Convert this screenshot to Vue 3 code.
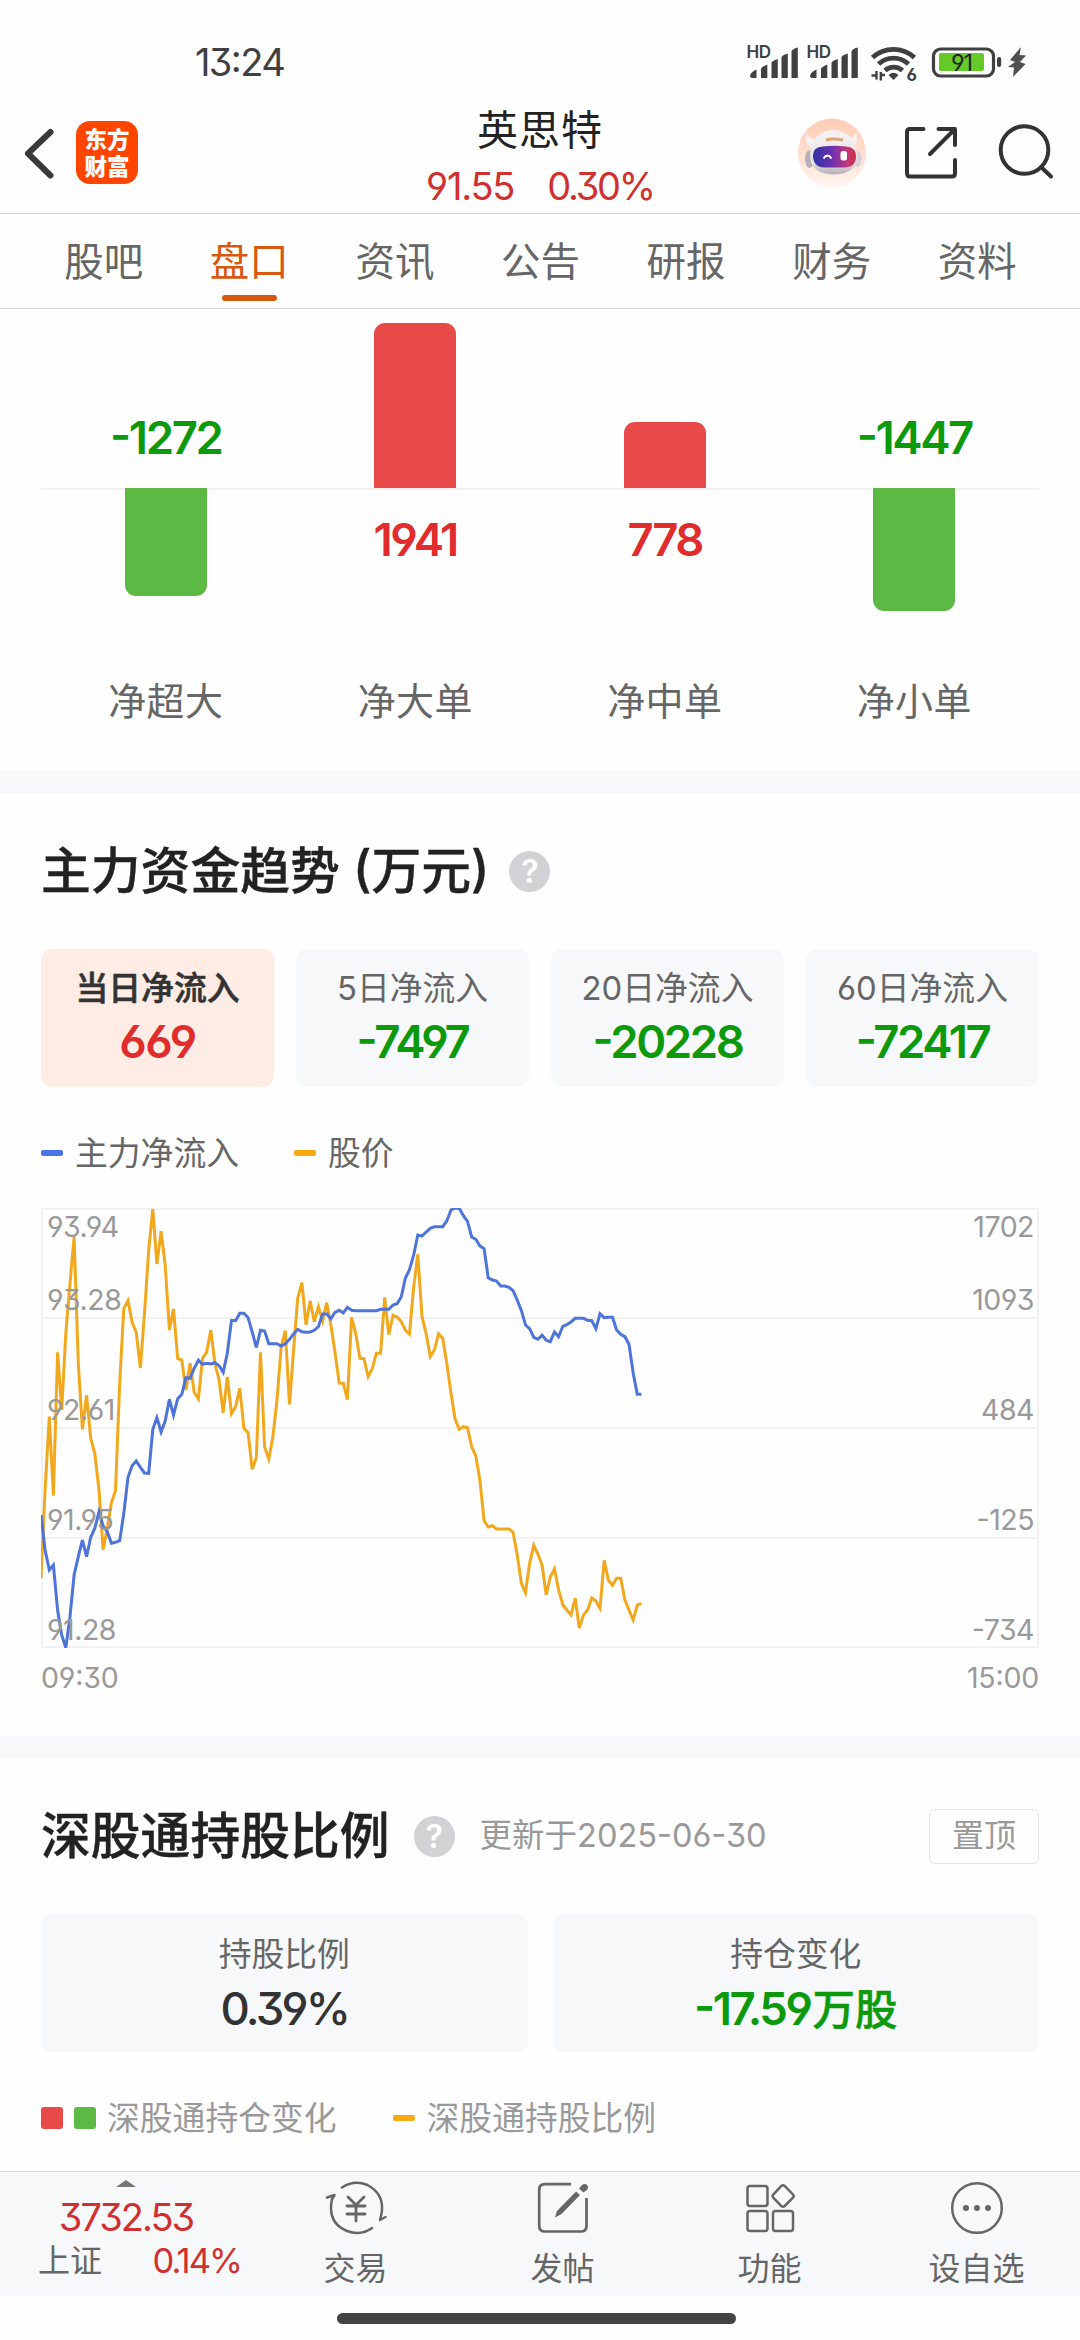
<script setup>
const tabs = ['股吧', '盘口', '资讯', '公告', '研报', '财务', '资料']
const activeTab = '盘口'

const orders = [
  { name: '净超大', value: -1272, size: 108 },
  { name: '净大单', value: 1941, size: 165 },
  { name: '净中单', value: 778, size: 66 },
  { name: '净小单', value: -1447, size: 123 },
]

const periods = [
  { name: '当日净流入', value: 669 },
  { name: '5日净流入', value: -7497 },
  { name: '20日净流入', value: -20228 },
  { name: '60日净流入', value: -72417 },
]

const priceAxis = ['93.94', '93.28', '92.61', '91.95', '91.28']
const flowAxis = ['1702', '1093', '484', '-125', '-734']
const gridLines = [1, 110, 220, 330, 439]

// One sample per minute, in thirds of a pixel from the top of the plot.
const price = [
  1165, 900, 680, 917, 487, 660, 430, 280, 140, 520, 718, 616, 745, 790, 900, 1080, 1015, 938, 902, 580,
  355, 332, 397, 427, 534, 370, 180, 57, 222, 124, 225, 420, 357, 506, 510, 600, 520, 607, 627, 505,
  487, 421, 520, 570, 668, 561, 671, 650, 595, 715, 728, 838, 803, 487, 770, 807, 740, 630, 470, 422,
  643, 480, 325, 278, 404, 332, 395, 350, 393, 338, 405, 487, 579, 580, 629, 382, 430, 505, 506, 560,
  535, 490, 490, 322, 434, 376, 381, 395, 421, 432, 290, 193, 380, 430, 500, 480, 431, 445, 520, 610,
  687, 718, 710, 713, 770, 798, 870, 992, 1011, 1007, 1017, 1017, 1017, 1017, 1027, 1095, 1180, 1208, 1120, 1066,
  1092, 1125, 1214, 1160, 1136, 1200, 1244, 1260, 1275, 1225, 1314, 1275, 1260, 1224, 1233, 1255, 1111, 1170, 1186, 1165,
  1165, 1230, 1260, 1290, 1245, 1240,
]
const flow = [
  975, 1080, 1140, 1125, 1260, 1335, 1373, 1280, 1155, 1100, 1050, 1100, 1042, 1015, 965, 1008, 1025, 1060, 1057, 1052,
  970, 862, 827, 813, 832, 849, 850, 718, 683, 726, 693, 628, 675, 626, 613, 563, 565, 535, 511, 523,
  520, 522, 518, 527, 547, 490, 391, 392, 370, 370, 383, 426, 472, 421, 423, 461, 461, 461, 468, 461,
  448, 432, 418, 425, 427, 426, 421, 410, 372, 372, 386, 367, 361, 369, 352, 361, 362, 362, 362, 362,
  362, 362, 358, 358, 358, 345, 341, 320, 264, 239, 195, 135, 138, 126, 115, 110, 110, 110, 93, 60,
  54, 55, 77, 94, 141, 148, 168, 176, 263, 270, 273, 288, 288, 292, 302, 330, 362, 405, 416, 442,
  448, 436, 451, 455, 426, 440, 409, 404, 396, 385, 385, 385, 391, 392, 416, 371, 383, 382, 382, 420,
  433, 440, 463, 550, 613, 613,
]
const toPoints = (series) =>
  series.map((y, i) => `${(i * 4.141).toFixed(1)},${((y - 54) / 3).toFixed(1)}`).join(' ')
const pricePoints = toPoints(price)
const flowPoints = toPoints(flow)
</script>

<template>
  <div class="screen">
    <div class="status">
      <span class="clock">13:24</span>
      <svg class="status-icons" width="290" height="44" viewBox="740 40 290 44">
        <g v-for="dx in [0, 60]" :key="dx" :transform="`translate(${dx} 0)`" fill="#404040">
          <text x="745.500" y="58" font-size="17" font-weight="600" letter-spacing="-0.500">HD</text>
          <path d="M749 76.500 q0-4 6.500-7 V78 h-5z" />
          <path d="M760 69 q0-2 6.300-4.500 V78 h-6.300z" />
          <path d="M770.500 63 q0-2 6.300-4 V78 h-6.300z" />
          <path d="M780.500 57.500 q0-2 6.300-4 V78 h-6.300z" />
          <path d="M790.500 52 q0-3 6.300-4.500 V78 h-6.300z" />
        </g>
        <g fill="none" stroke="#404040" stroke-width="4.800">
          <path d="M871.500 57.500 a31 31 0 0 1 42 0" />
          <path d="M877.500 64 a22 22 0 0 1 30 0" />
          <path d="M884 70.500 a13 13 0 0 1 17.500 0" />
        </g>
        <path d="M887.500 75 q5-4.500 10 0 l-5 5z" fill="#404040" />
        <g fill="none" stroke="#404040" stroke-width="2.400">
          <path d="M870.500 75.500 H875.500 V71 M875.500 79.500 V73" />
          <path d="M879.800 80.500 V72 M879.800 75 H884" />
        </g>
        <text x="905.500" y="80.500" font-size="17" font-weight="700" fill="#404040">6</text>
        <rect x="932.500" y="49" width="60" height="27" rx="7" fill="#fff" stroke="#404040" stroke-width="3.200" />
        <rect x="938" y="53" width="45" height="18" rx="2" fill="#65ca27" />
        <text x="950" y="70.700" font-size="23.500" fill="#222" textLength="22">91</text>
        <rect x="996" y="57" width="4.200" height="10" rx="2" fill="#404040" />
        <path d="M1020 47 L1009 60 L1014 62 L1007 67 L1013 67.500 L1012 77 L1024.500 64 L1019 62 L1025 55.500 L1018.500 55z" fill="#505050" />
      </svg>
    </div>

    <header class="nav">
      <div class="nav-left">
        <svg width="34" height="60" viewBox="22 122 34 60" fill="none" stroke="#383938" stroke-width="6" stroke-linecap="round" stroke-linejoin="round">
          <path d="M50.500 131 L28 152.500 L50.500 174.500" />
        </svg>
        <div class="logo"><span>东方</span><span>财富</span></div>
      </div>
      <div class="stock">
        <div class="stock-name">英思特</div>
        <div class="stock-quote"><span class="quote-price">91.55</span><span class="quote-change">0.30%</span></div>
      </div>
      <div class="nav-right">
        <svg class="robot" width="68" height="70" viewBox="0 0 68 70">
          <defs>
            <linearGradient id="halo" x1="0" y1="0" x2="0" y2="1">
              <stop offset="0" stop-color="#ffccb4" />
              <stop offset=".6" stop-color="#ffe2d5" />
              <stop offset="1" stop-color="#fff6f1" />
            </linearGradient>
            <linearGradient id="visor" x1="0" y1="0" x2="1" y2="0">
              <stop offset="0" stop-color="#2f33a4" />
              <stop offset=".45" stop-color="#7030b0" />
              <stop offset=".8" stop-color="#c23a78" />
              <stop offset="1" stop-color="#d03045" />
            </linearGradient>
            <linearGradient id="shell" x1="0" y1="0" x2="0" y2="1">
              <stop offset="0" stop-color="#f8f3f3" />
              <stop offset=".75" stop-color="#e6e0e4" />
              <stop offset="1" stop-color="#b3acb4" />
            </linearGradient>
          </defs>
          <ellipse cx="34" cy="35" rx="34" ry="34.500" fill="url(#halo)" />
          <path d="M8 16 q5 5 10 6 l-4 8 q-8-4-6-14z M58 15 q-3 5-8 6 l5 8 q7-5 3-14z" fill="#f5efed" />
          <ellipse cx="11.500" cy="41" rx="4.500" ry="9" fill="#b5b0b9" />
          <ellipse cx="59.500" cy="41" rx="4" ry="8" fill="#d8cfd8" />
          <path d="M12 37 Q14 13 35 12 Q56 13 59 36 Q60 56 36 56.500 Q12 56 12 37z" fill="url(#shell)" />
          <path d="M28 22 q7.500-2 17 0" fill="none" stroke="#d9a67a" stroke-width="3" />
          <path d="M15 37 Q15 29 25 28.500 Q36 27 48 28.500 Q58 29 58 38 Q58 49 47 49.500 H26 Q15 49 15 37z" fill="url(#visor)" />
          <path d="M25.500 40.500 q4-6 8 0" fill="none" stroke="#fff" stroke-width="2" />
          <rect x="42.500" y="33" width="6.500" height="9.500" rx="2.500" fill="#fff" />
        </svg>
        <svg class="share" width="56" height="56" viewBox="902 125 56 56" fill="none" stroke="#333" stroke-width="4" stroke-linejoin="round" stroke-linecap="round">
          <path d="M922.500 129 H909 Q906 129 906 132 V173 Q906 176.500 909 176.500 H951 Q954 176.500 954 173.500 V160" />
          <path d="M937.500 129 H954 V145 M953 130 L929 154" />
        </svg>
        <svg class="search" width="60" height="60" viewBox="997 123 60 60" fill="none" stroke="#333" stroke-width="4" stroke-linecap="round">
          <circle cx="1023.500" cy="150" r="23.800" />
          <path d="M1040 167 L1050 176.500" />
        </svg>
      </div>
    </header>

    <nav class="tabs">
      <span v-for="tab in tabs" :key="tab" class="tab" :class="{ active: tab === activeTab }">{{ tab }}</span>
    </nav>

    <section class="orders">
      <div v-for="o in orders" :key="o.name" class="order" :class="o.value < 0 ? 'down' : 'up'">
        <div class="half upper">
          <span v-if="o.value < 0" class="order-value">{{ o.value }}</span>
          <i v-else class="bar" :style="{ height: o.size + 'px' }"></i>
        </div>
        <div class="half lower">
          <i v-if="o.value < 0" class="bar" :style="{ height: o.size + 'px' }"></i>
          <span v-else class="order-value">{{ o.value }}</span>
        </div>
        <span class="order-name">{{ o.name }}</span>
      </div>
    </section>

    <section class="block trend">
      <div class="heading">
        <h2>主力资金趋势 (万元)</h2>
        <span class="help">?</span>
      </div>
      <div class="cards">
        <div v-for="(p, i) in periods" :key="p.name" class="card" :class="{ selected: i === 0 }">
          <span class="card-name">{{ p.name }}</span>
          <span class="card-value" :class="p.value < 0 ? 'green' : 'red'">{{ p.value }}</span>
        </div>
      </div>
      <div class="legend">
        <i class="dash blue"></i><span>主力净流入</span>
        <i class="dash amber second"></i><span>股价</span>
      </div>
      <div class="plot">
        <svg width="998" height="440" viewBox="0 0 998 440" fill="none">
          <g stroke="#f1f1f1" stroke-width="2">
            <path v-for="y in gridLines" :key="y" :d="`M0 ${y} H998`" />
            <path d="M1 0 V440 M997 0 V440" />
          </g>
          <polyline :points="pricePoints" stroke="#f2a81d" stroke-width="3" />
          <polyline :points="flowPoints" stroke="#4c74d9" stroke-width="3" />
        </svg>
        <div class="axis left"><span v-for="v in priceAxis" :key="v">{{ v }}</span></div>
        <div class="axis right"><span v-for="v in flowAxis" :key="v">{{ v }}</span></div>
      </div>
      <div class="times"><span>09:30</span><span>15:00</span></div>
    </section>

    <section class="block holding">
      <div class="heading">
        <h2>深股通持股比例</h2>
        <span class="help">?</span>
        <span class="updated">更新于<span class="date">2025-06-30</span></span>
        <span class="pin">置顶</span>
      </div>
      <div class="cards wide">
        <div class="card">
          <span class="card-name">持股比例</span>
          <span class="card-value dark">0.39%</span>
        </div>
        <div class="card">
          <span class="card-name">持仓变化</span>
          <span class="card-value green">-17.59<span class="unit">万股</span></span>
        </div>
      </div>
      <div class="legend light">
        <i class="square rise"></i><i class="square fall"></i><span>深股通持仓变化</span>
        <i class="dash amber third"></i><span>深股通持股比例</span>
      </div>
    </section>

    <footer class="toolbar">
      <div class="index">
        <svg width="20" height="7" viewBox="0 0 20 7"><path d="M0 7 L10 0 L20 7z" fill="#77777b" /></svg>
        <span class="index-value">3732.53</span>
        <div class="index-row"><span>上证</span><span class="index-change">0.14%</span></div>
      </div>
      <div class="tool">
        <svg width="64" height="56" viewBox="0 0 64 56" fill="none" stroke="#666" stroke-width="2.500" stroke-linecap="round" stroke-linejoin="round">
          <path d="M18 7.500 Q30 -0.500 43.500 5 Q62 15 57 36 L56 40 L61.500 37" />
          <path d="M48 48 Q37 56 23 51 Q3 43 8 19 L10.500 15 L3 17.500" />
          <path d="M24 17 L32 25 L40 17 M23 26 H41 M23 34 H41 M32 25 V41" stroke-width="2.800" />
        </svg>
        <span>交易</span>
      </div>
      <div class="tool">
        <svg width="64" height="56" viewBox="0 0 64 56" fill="none" stroke="#666" stroke-width="2.700">
          <path d="M40 4.200 H14 Q8.200 4.200 8.200 10 V46 Q8.200 51.500 14 51.500 H50 Q55.500 51.500 55.500 46 V18" />
          <path d="M24 37.500 L26 31 L45 11.500 L49 15 L30.500 34z M48 8.500 L51 5 Q54 3 56 5 Q58 7 56 10 L52.500 12.500z" fill="#666" stroke="none" />
        </svg>
        <span>发帖</span>
      </div>
      <div class="tool">
        <svg width="64" height="56" viewBox="0 0 64 56" fill="none" stroke="#666" stroke-width="2.500">
          <rect x="9.500" y="6" width="20" height="20" rx="2.500" />
          <rect x="9.500" y="31" width="20" height="20" rx="2.500" />
          <rect x="35" y="31" width="20" height="20" rx="2.500" />
          <path d="M43.300 6 Q45 4.500 46.700 6 L55 14.500 Q56.500 16 55 17.700 L46.700 26 Q45 27.500 43.300 26 L35.300 17.700 Q33.700 16 35.300 14.500z" />
        </svg>
        <span>功能</span>
      </div>
      <div class="tool">
        <svg width="64" height="56" viewBox="0 0 64 56" fill="none" stroke="#666" stroke-width="2.500">
          <circle cx="32" cy="28" r="24.800" />
          <g fill="#666" stroke="none">
            <circle cx="21" cy="28" r="3" /><circle cx="32" cy="28" r="3" /><circle cx="43" cy="28" r="3" />
          </g>
        </svg>
        <span>设自选</span>
      </div>
    </footer>
    <div class="home"><i></i></div>
  </div>
</template>

<style>
body {
  background: #fff;
}
</style>

<style scoped>
.screen {
  width: 1080px;
  height: 2340px;
  overflow: hidden;
  display: flex;
  flex-direction: column;
  background: #fefefe;
  color: #666;
  font-family: Inter, "Noto Sans CJK SC", sans-serif;
  font-feature-settings: "cv03", "cv04", "cv09", "case";
}
.screen * {
  box-sizing: border-box;
  flex-shrink: 0;
  white-space: nowrap;
}
.status {
  height: 94px;
  display: flex;
  justify-content: space-between;
  padding: 40px 49px 0 195px;
}
.clock {
  font-size: 38px;
  line-height: 45px;
  color: #404040;
  letter-spacing: -1.6px;
}
.nav {
  height: 120px;
  display: grid;
  grid-template-columns: 1fr auto 1fr;
  border-bottom: 1px solid #d5d5d5;
}
.nav-left {
  display: flex;
  align-items: center;
  gap: 20px;
  padding: 0 0 3px 22px;
}
.logo {
  width: 62px;
  height: 63px;
  border-radius: 14px;
  background: #ff4500;
  color: #fff;
  font-size: 22.500px;
  font-weight: 900;
  line-height: 27px;
  display: flex;
  flex-direction: column;
  align-items: center;
  justify-content: center;
}
.stock {
  padding-top: 8px;
  text-align: center;
}
.stock-name {
  font-size: 41px;
  letter-spacing: 1px;
  line-height: 56px;
  color: #222;
}
.stock-quote {
  font-size: 38px;
  line-height: 56px;
  color: #d0302f;
  letter-spacing: -1.2px;
}
.quote-price {
  margin-right: 33px;
}
.quote-change {
  letter-spacing: -2.200px;
}
.nav-right {
  display: flex;
  align-items: center;
  justify-content: flex-end;
  padding: 0 22px 2px 0;
}
.share {
  margin-left: 37px;
}
.search {
  margin-left: 39px;
}
.tabs {
  height: 95px;
  display: flex;
  padding: 0 30px 0 31px;
  border-bottom: 1px solid #d5d5d5;
}
.tab {
  flex: 1;
  display: flex;
  flex-direction: column;
  align-items: center;
  font-size: 39.500px;
  line-height: 80px;
  padding-top: 8px;
}
.active {
  color: #d9580f;
}
.active::after {
  content: "";
  width: 55px;
  height: 6px;
  border-radius: 3px;
  margin-top: -7px;
  background: currentColor;
}
.orders {
  height: 462px;
  display: flex;
  padding: 1px 41px 0;
}
.order {
  flex: 1;
  display: flex;
  flex-direction: column;
  align-items: center;
}
.half {
  width: 100%;
  display: flex;
  flex-direction: column;
  align-items: center;
}
.upper {
  height: 178px;
  justify-content: flex-end;
}
.lower {
  height: 183px;
  background: linear-gradient(#f1f1f1, #f1f1f1) top / 100% 2px no-repeat;
}
.bar {
  width: 82px;
}
.up .bar {
  background: #e84a49;
  border-radius: 11px 11px 0 0;
}
.down .bar {
  background: #5bb944;
  border-radius: 0 0 11px 11px;
}
.order-value,
.card-value {
  font-size: 45.500px;
  font-weight: 600;
  letter-spacing: -2.400px;
}
.order-value {
  line-height: 60px;
}
.up .order-value {
  color: #e02c2c;
  margin-top: 22px;
}
.down .order-value {
  color: #0c9a0c;
  margin-bottom: 20px;
}
.order-name {
  font-size: 38px;
  letter-spacing: 0.4px;
  line-height: 60px;
}
.block {
  border-top: 22px solid #f7f8fa;
  padding: 0 41px;
}
.trend {
  height: 965px;
}
.holding {
  height: 435px;
}
.heading {
  height: 156px;
  display: flex;
  align-items: center;
}
h2 {
  margin: 0;
  font-size: 49.800px;
  font-weight: 500;
  line-height: 60px;
  color: #222;
  -webkit-text-stroke: 0.4px #222;
}
.help {
  width: 41px;
  height: 41px;
  margin-left: 20px;
  border-radius: 50%;
  background: #d2d2d4;
  color: #fff;
  font-size: 32px;
  font-weight: 600;
  line-height: 41px;
  text-align: center;
}
.holding .help {
  margin-left: 24px;
}
.updated {
  margin-left: 25px;
  font-size: 32.500px;
  line-height: 54px;
  color: #999;
}
.date {
  letter-spacing: 0;
}
.pin {
  width: 110px;
  height: 55px;
  margin-left: auto;
  border: 1px solid #e2e2e4;
  border-radius: 6px;
  font-size: 32px;
  line-height: 52px;
  text-align: center;
  color: #999;
}
.cards {
  display: flex;
  gap: 22px;
}
.cards.wide {
  gap: 25px;
}
.card {
  flex: 1;
  height: 138px;
  border-radius: 11px;
  background: #f7f8fa;
  display: flex;
  flex-direction: column;
  align-items: center;
}
.selected {
  background: #ffece4;
}
.card-name {
  margin-top: 14px;
  font-size: 32.800px;
  line-height: 50px;
}
.selected .card-name {
  color: #333;
  font-weight: 500;
  -webkit-text-stroke: 0.6px #333;
}
.card-value {
  line-height: 58px;
}
.red.card-value {
  letter-spacing: -1.500px;
}
.wide .card-name {
  margin-top: 15px;
}
.wide .card-value {
  line-height: 60px;
}
.card-value.dark {
  font-weight: 500;
  letter-spacing: -2.800px;
}
.unit {
  font-size: 42.500px;
  font-weight: 500;
  letter-spacing: 0;
  margin-left: 2px;
  -webkit-text-stroke: 0.5px #0c9a0c;
}
.red {
  color: #e02c2c;
}
.green {
  color: #0c9a0c;
}
.dark {
  color: #333;
}
.legend {
  height: 121px;
  display: flex;
  align-items: center;
  padding-top: 10px;
  font-size: 32.800px;
}
.legend span {
  line-height: 50px;
}
.dash {
  width: 22px;
  height: 6px;
  border-radius: 2px;
  margin-right: 12px;
}
.blue {
  background: #4874e6;
}
.amber {
  background: #f7a912;
}
.second {
  margin-left: 55px;
}
.third {
  margin-left: 56px;
}
.light {
  color: #999;
}
.square {
  width: 22px;
  height: 22px;
  border-radius: 3px;
  margin-right: 11px;
}
.rise {
  background: #e84a49;
}
.fall {
  background: #5bb944;
}
.plot {
  position: relative;
  height: 440px;
}
.plot svg {
  display: block;
}
.axis {
  position: absolute;
  top: 4px;
  bottom: 3px;
  display: flex;
  flex-direction: column;
  font-size: 28.500px;
  line-height: 30px;
  color: #999;
  letter-spacing: -0.500px;
}
.axis span + span {
  margin-top: 80px;
}
.axis span:nth-child(2) {
  margin-top: 43px;
}
.left {
  left: 6px;
}
.right {
  right: 5px;
  align-items: flex-end;
}
.times {
  display: flex;
  justify-content: space-between;
  padding-top: 15px;
  font-size: 28.500px;
  line-height: 30px;
  color: #999;
  letter-spacing: -0.200px;
}
.toolbar {
  height: 125px;
  display: flex;
  border-top: 1px solid #d4d6da;
  background: #f7f8fa;
}
.index {
  width: 252px;
  padding-top: 8px;
  display: flex;
  flex-direction: column;
  align-items: center;
}
.index-value {
  margin-top: 8px;
  font-size: 38px;
  line-height: 44px;
  letter-spacing: -2px;
  color: #d0302f;
}
.index-row {
  width: 252px;
  display: flex;
  justify-content: space-between;
  padding: 0 11px 0 38px;
  font-size: 32px;
  line-height: 44px;
}
.index-change {
  font-size: 34.500px;
  letter-spacing: -1.900px;
  color: #d0302f;
}
.tool {
  flex: 1;
  display: flex;
  flex-direction: column;
  align-items: center;
  padding-top: 8px;
  font-size: 32px;
  line-height: 65px;
}
.home {
  height: 44px;
  padding-top: 17px;
  display: flex;
  justify-content: center;
}
.home i {
  width: 399px;
  height: 11px;
  border-radius: 6px;
  margin-right: 7px;
  background: #444;
}
</style>
